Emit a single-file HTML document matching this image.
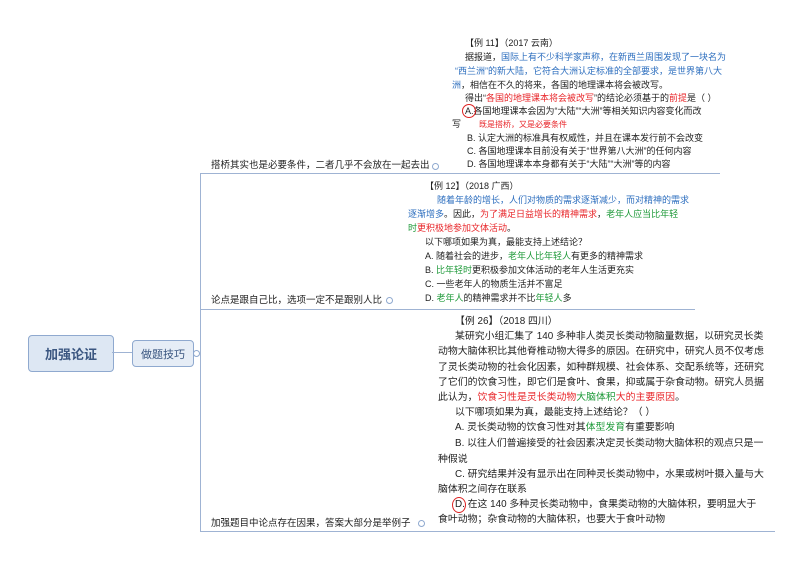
<!DOCTYPE html>
<html><head><meta charset="utf-8"><style>
body{margin:0;width:800px;height:566px;background:#fff;position:relative;overflow:hidden;font-family:"Liberation Sans","Noto Sans CJK SC",sans-serif;color:#222}
.l{position:absolute;white-space:nowrap;font-size:9px;line-height:12px}
.k{font-size:9px}
.m{font-size:9.9px;line-height:13px}
.b{color:#2e6fbf}.r{color:#e8262a}.g{color:#1f9a3a}
.hl{position:absolute;height:1px;background:#9fb3d3}
.vl{position:absolute;width:1px;background:#9fb3d3}
.box{position:absolute;border:1px solid #8fa9cf;border-radius:4px;background:#dde7f3;display:flex;align-items:center;justify-content:center;color:#3a5680}
.circ{position:absolute;border:1px solid #d22;border-radius:50%}
.dot{position:absolute;width:5px;height:5px;border:1px solid #8fa9cf;border-radius:50%}
</style></head><body>
<div class="box" style="left:28px;top:335px;width:84px;height:35px;font-size:13px;font-weight:bold">加强论证</div>
<div class="hl" style="left:112px;top:352px;width:20px"></div>
<div class="box" style="left:132px;top:340px;width:60px;height:25px;font-size:11px;background:#e6edf6">做题技巧</div>
<div class="dot" style="left:193px;top:350px"></div>
<div class="vl" style="left:200px;top:173px;height:358px"></div>
<div class="hl" style="left:200px;top:173px;width:520px"></div>
<div class="hl" style="left:200px;top:309px;width:495px"></div>
<div class="hl" style="left:200px;top:531px;width:575px"></div>

<div class="l" style="left:211px;top:160px;font-size:9.5px">搭桥其实也是必要条件，二者几乎不会放在一起去出</div>
<div class="dot" style="left:432px;top:163px"></div>
<div class="l" style="left:211px;top:295px;font-size:9.5px">论点是跟自己比，选项一定不是跟别人比</div>
<div class="dot" style="left:386px;top:297px"></div>
<div class="l" style="left:211px;top:518px;font-size:9.5px">加强题目中论点存在因果，答案大部分是举例子</div>
<div class="dot" style="left:418px;top:520px"></div>

<div class="l" style="left:465px;top:37px">【例 11】（2017 云南）</div>
<div class="l" style="left:465px;top:51px">据报道，<span class="b">国际上有不少科学家声称，在新西兰周围发现了一块名为</span></div>
<div class="l b" style="left:455px;top:65px">“西兰洲”的新大陆，它符合大洲认定标准的全部要求，是世界第八大</div>
<div class="l" style="left:452px;top:79px"><span class="b">洲</span>，相信在不久的将来，各国的地理课本将会被改写。</div>
<div class="l" style="left:465px;top:92px">得出“<span class="r">各国的地理课本将会被改写</span>”的结论必须基于的<span class="r">前提</span>是（ ）</div>
<div class="l" style="left:465px;top:105px">A.各国地理课本会因为“大陆”“大洲”等相关知识内容变化而改</div>
<div class="circ" style="left:462px;top:104px;width:12px;height:12px"></div>
<div class="l" style="left:452px;top:118px">写　　<span class="r" style="font-size:8px">既是搭桥，又是必要条件</span></div>
<div class="l" style="left:467px;top:132px">B. 认定大洲的标准具有权威性，并且在课本发行前不会改变</div>
<div class="l" style="left:467px;top:145px">C. 各国地理课本目前没有关于“世界第八大洲”的任何内容</div>
<div class="l" style="left:467px;top:158px">D. 各国地理课本本身都有关于“大陆”“大洲”等的内容</div>

<div class="l k" style="left:425px;top:180px">【例 12】（2018 广西）</div>
<div class="l k b" style="left:437px;top:194px">随着年龄的增长，人们对物质的需求逐渐减少，而对精神的需求</div>
<div class="l k" style="left:408px;top:208px"><span class="b">逐渐增多</span>。因此，<span class="r">为了满足日益增长的精神需求</span>，<span class="g">老年人应当比年轻</span></div>
<div class="l k" style="left:408px;top:222px"><span class="g">时</span><span class="r">更积极地参加文体活动</span>。</div>
<div class="l k" style="left:425px;top:236px">以下哪项如果为真，最能支持上述结论？</div>
<div class="l k" style="left:425px;top:250px">A. 随着社会的进步，<span class="g">老年人比年轻人</span>有更多的精神需求</div>
<div class="l k" style="left:425px;top:264px">B. <span class="g">比年轻时</span>更积极参加文体活动的老年人生活更充实</div>
<div class="l k" style="left:425px;top:278px">C. 一些老年人的物质生活并不富足</div>
<div class="l k" style="left:425px;top:292px">D. <span class="g">老年人</span>的精神需求并不比<span class="g">年轻人</span>多</div>

<div class="l m" style="left:455px;top:315px">【例 26】（2018 四川）</div>
<div class="l m" style="left:455px;top:330px">某研究小组汇集了 140 多种非人类灵长类动物脑量数据，以研究灵长类</div>
<div class="l m" style="left:438px;top:345px">动物大脑体积比其他脊椎动物大得多的原因。在研究中，研究人员不仅考虑</div>
<div class="l m" style="left:438px;top:361px">了灵长类动物的社会化因素，如种群规模、社会体系、交配系统等，还研究</div>
<div class="l m" style="left:438px;top:376px">了它们的饮食习性，即它们是食叶、食果，抑或属于杂食动物。研究人员据</div>
<div class="l m" style="left:438px;top:391px">此认为，<span class="r">饮食习性是灵长类动物</span><span class="g">大脑体积</span><span class="r">大的主要原因</span>。</div>
<div class="l m" style="left:455px;top:406px">以下哪项如果为真，最能支持上述结论？（ ）</div>
<div class="l m" style="left:455px;top:421px">A. 灵长类动物的饮食习性对其<span class="g">体型发育</span>有重要影响</div>
<div class="l m" style="left:455px;top:437px">B. 以往人们普遍接受的社会因素决定灵长类动物大脑体积的观点只是一</div>
<div class="l m" style="left:438px;top:453px">种假说</div>
<div class="l m" style="left:455px;top:468px">C. 研究结果并没有显示出在同种灵长类动物中，水果或树叶摄入量与大</div>
<div class="l m" style="left:438px;top:483px">脑体积之间存在联系</div>
<div class="l m" style="left:455px;top:498px">D. 在这 140 多种灵长类动物中，食果类动物的大脑体积，要明显大于</div>
<div class="circ" style="left:452px;top:497px;width:12px;height:14px"></div>
<div class="l m" style="left:438px;top:513px">食叶动物；杂食动物的大脑体积，也要大于食叶动物</div>
</body></html>
